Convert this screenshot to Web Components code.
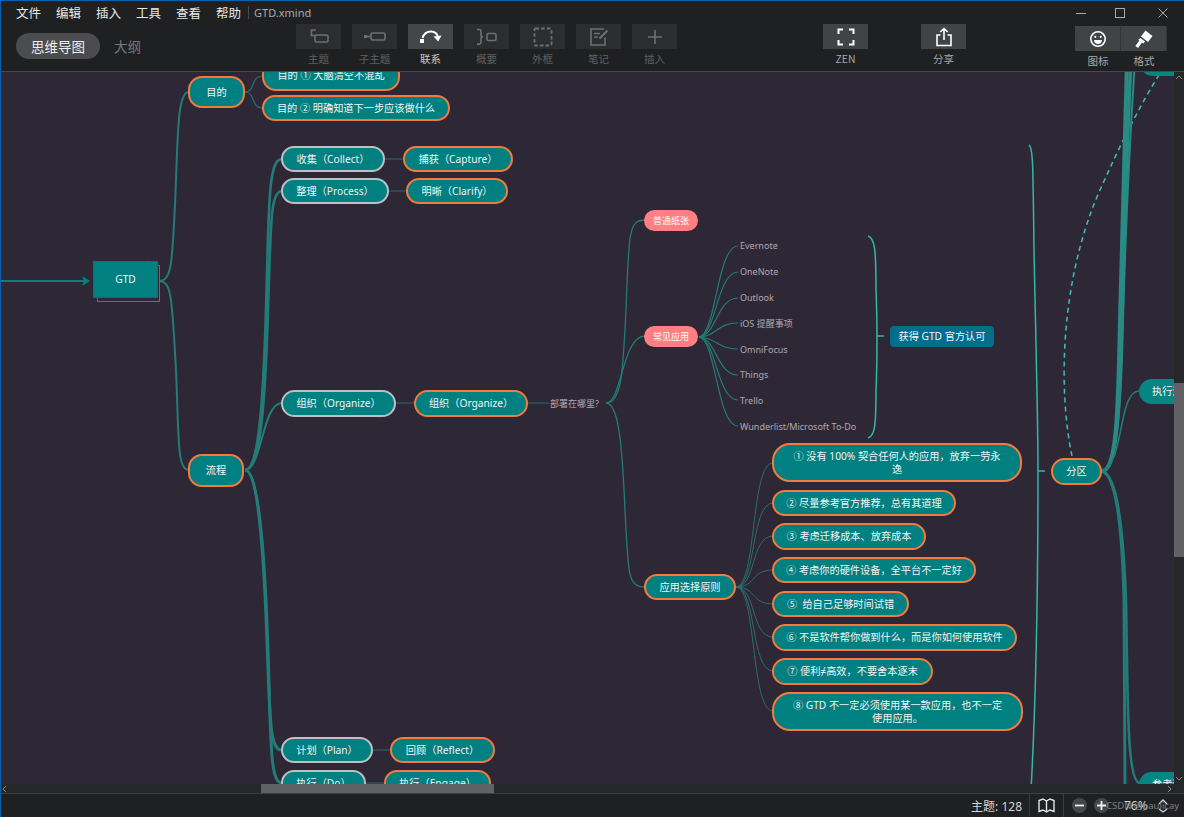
<!DOCTYPE html>
<html lang="zh">
<head>
<meta charset="utf-8">
<title>GTD.xmind</title>
<style>
    html, body { margin: 0; height: 100%; background: #1f2022; overflow: hidden; }
    body { font-family: "Noto Sans", "Noto Sans CJK SC", sans-serif; }
</style>
</head>
<body>
<app-window>
    <menu-bar slot="menu" file="GTD.xmind"></menu-bar>
    <tool-bar slot="tools">
        <tool-button label="主题" dim>
            <svg viewBox="0 0 24 20" width="24" height="20" fill="none" stroke="currentColor" stroke-width="1.6"><path d="M9 3H4.500v5.500H8"/><rect x="8" y="8" width="13" height="7" rx="1.500"/></svg>
        </tool-button>
        <tool-button label="子主题" dim>
            <svg viewBox="0 0 24 20" width="24" height="20" fill="none" stroke="currentColor" stroke-width="1.6"><rect x="1" y="8" width="3" height="3" fill="currentColor" stroke="none"/><path d="M4 9.500h3"/><rect x="8" y="6" width="14" height="7" rx="1.500"/></svg>
        </tool-button>
        <tool-button label="联系" active>
            <svg viewBox="0 0 24 20" width="24" height="20" fill="none" stroke="currentColor" stroke-width="2"><rect x="1" y="12" width="4" height="4" fill="currentColor" stroke="none"/><path d="M3.500 11C5 6.500 8.500 4.500 12 4.500c3.500 0 6 2 7 5.500"/><path d="M14.500 9.500l4.700 5 3.300-6z" fill="currentColor" stroke="none"/></svg>
        </tool-button>
        <tool-button label="概要" dim>
            <svg viewBox="0 0 24 20" width="24" height="20" fill="none" stroke="currentColor" stroke-width="1.600"><path d="M2 2.500h2.500c1.500 0 1.500 1 1.500 2.500v3c0 1 .5 1.800 2 1.800-1.500 0-2 .8-2 1.800v3c0 1.500 0 2.500-1.500 2.500H2"/><rect x="12" y="6.500" width="9" height="7" rx="1.500"/></svg>
        </tool-button>
        <tool-button label="外框" dim>
            <svg viewBox="0 0 24 20" width="24" height="20" fill="none" stroke="currentColor" stroke-width="1.800" stroke-dasharray="3.500 2.200"><rect x="3.500" y="1.500" width="17" height="17" rx="1"/></svg>
        </tool-button>
        <tool-button label="笔记" dim>
            <svg viewBox="0 0 24 20" width="24" height="20" fill="none" stroke="currentColor" stroke-width="1.600"><path d="M18 10.500v7.500H4V2h13"/><path d="M7 6.500h6M7 10h4"/><path d="M12.500 11.500L20.500 3.500" stroke-width="2.200"/></svg>
        </tool-button>
        <tool-button label="插入" dim>
            <svg viewBox="0 0 24 20" width="24" height="20" fill="none" stroke="currentColor" stroke-width="1.600"><path d="M12 3v14M5 10h14"/></svg>
        </tool-button>
        <tool-button label="ZEN" class="zen" bright>
            <svg viewBox="0 0 24 20" width="24" height="20" fill="none" stroke="currentColor" stroke-width="2"><path d="M9 2.500H4.500V7M15 2.500h4.500V7M9 17.500H4.500V13M15 17.500h4.500V13"/></svg>
        </tool-button>
        <tool-button label="分享" class="share" bright>
            <svg viewBox="0 0 24 20" width="24" height="20" fill="none" stroke="currentColor" stroke-width="1.600"><path d="M8.500 8H5v10.500h14V8h-3.500"/><path d="M12 13V2M8.300 5L12 1.500 15.700 5"/></svg>
        </tool-button>
        <tool-pair class="pair">
            <tool-button label="图标" bright joined>
                <svg viewBox="0 0 24 20" width="24" height="20" fill="none" stroke="currentColor" stroke-width="1.600"><circle cx="12" cy="10" r="7.200"/><circle cx="9.300" cy="7.800" r="1.100" fill="currentColor" stroke="none"/><circle cx="14.700" cy="7.800" r="1.100" fill="currentColor" stroke="none"/><path d="M8 11h8c0 2.700-1.700 4-4 4s-4-1.300-4-4z" fill="currentColor" stroke="none"/></svg>
            </tool-button>
            <tool-button label="格式" bright joined>
                <svg viewBox="0 0 24 20" width="24" height="20" fill="currentColor"><path d="M13.500 1.500l7 5.500-4.500 6-7-5.500z"/><path d="M8.500 9l4.500 3.500-1.500 2-1.500-1-4 5.500-2.700-2 4-5.300-1-1z"/></svg>
            </tool-button>
        </tool-pair>
    </tool-bar>

    <mind-map slot="canvas">
        <map-node kind="focus" x="188" y="76" w="57" h="32">目的</map-node>
        <map-node kind="focus" x="262" y="60" w="138" h="31">目的 ① 大脑清空不混乱</map-node>
        <map-node kind="focus" x="262" y="95" w="188" h="26">目的 ② 明确知道下一步应该做什么</map-node>
        <map-node kind="root" x="93" y="261" w="65" h="37">GTD</map-node>
        <map-node kind="grey" x="281" y="146" w="104" h="26">收集（Collect）</map-node>
        <map-node kind="focus" x="403" y="146" w="110" h="26">捕获（Capture）</map-node>
        <map-node kind="grey" x="281" y="178" w="108" h="26">整理（Process）</map-node>
        <map-node kind="focus" x="406" y="178" w="102" h="26">明晰（Clarify）</map-node>
        <map-node kind="grey" x="281" y="390" w="115" h="27">组织（Organize）</map-node>
        <map-node kind="focus" x="414" y="390" w="114" h="27">组织（Organize）</map-node>
        <map-node kind="focus" x="188" y="454" w="56" h="33">流程</map-node>
        <map-node kind="plain" x="550" y="396" w="50" h="14">部署在哪里?</map-node>
        <map-node kind="pink" x="644" y="210" w="54" h="21">普通纸张</map-node>
        <map-node kind="pink" x="644" y="326" w="54" h="21">常见应用</map-node>
        <map-node kind="plain" x="740" y="238" w="60" h="14">Evernote</map-node>
        <map-node kind="plain" x="740" y="264" w="60" h="14">OneNote</map-node>
        <map-node kind="plain" x="740" y="290" w="60" h="14">Outlook</map-node>
        <map-node kind="plain" x="740" y="316" w="70" h="14">iOS 提醒事项</map-node>
        <map-node kind="plain" x="740" y="342" w="60" h="14">OmniFocus</map-node>
        <map-node kind="plain" x="740" y="367" w="60" h="14">Things</map-node>
        <map-node kind="plain" x="740" y="393" w="60" h="14">Trello</map-node>
        <map-node kind="plain" x="740" y="419" w="125" h="14">Wunderlist/Microsoft To-Do</map-node>
        <map-node kind="blue" x="890" y="326" w="104" h="21">获得 GTD 官方认可</map-node>
        <map-node kind="focus" x="644" y="574" w="92" h="26">应用选择原则</map-node>
        <map-node kind="focus" x="772" y="443" w="250" h="39" radius="18">① 没有 100% 契合任何人的应用，放弃一劳永<br>逸</map-node>
        <map-node kind="focus" x="772" y="490" w="184" h="26">② 尽量参考官方推荐，总有其道理</map-node>
        <map-node kind="focus" x="772" y="523" w="154" h="27">③ 考虑迁移成本、放弃成本</map-node>
        <map-node kind="focus" x="772" y="557" w="204" h="26">④ 考虑你的硬件设备，全平台不一定好</map-node>
        <map-node kind="focus" x="772" y="591" w="137" h="26">⑤&nbsp; 给自己足够时间试错</map-node>
        <map-node kind="focus" x="772" y="624" w="245" h="27">⑥ 不是软件帮你做到什么，而是你如何使用软件</map-node>
        <map-node kind="focus" x="772" y="658" w="161" h="27">⑦ 便利≠高效，不要舍本逐末</map-node>
        <map-node kind="focus" x="772" y="692" w="251" h="39" radius="18">⑧ GTD 不一定必须使用某一款应用，也不一定<br>使用应用。</map-node>
        <map-node kind="focus" x="1051" y="458" w="51" h="27">分区</map-node>
        <map-node kind="flat" x="1139" y="379" w="70" h="25">执行清单</map-node>
        <map-node kind="flat" x="1139" y="772" w="70" h="25">参考资料</map-node>
        <map-node kind="flat" x="1140" y="50" w="70" h="26"></map-node>
        <map-node kind="grey" x="281" y="737" w="92" h="26">计划（Plan）</map-node>
        <map-node kind="focus" x="390" y="737" w="105" h="26">回顾（Reflect）</map-node>
        <map-node kind="grey" x="281" y="770" w="85" h="26">执行（Do）</map-node>
        <map-node kind="focus" x="384" y="770" w="107" h="26">执行（Engage）</map-node>
    </mind-map>

    <status-bar slot="status" topics="128" zoom="76%"></status-bar>
</app-window>

<script>
class AppWindow extends HTMLElement {
    constructor() {
        super();
        this.attachShadow({ mode: 'open' });
        this.shadowRoot.innerHTML = `
            <style>
                :host {
                    display: flex;
                    flex-direction: column;
                    width: 1184px;
                    height: 817px;
                    box-sizing: border-box;
                    border-top: 1px solid #0a62ad;
                    border-left: 1px solid #0a62ad;
                    background: #1f2022;
                }
                .work {
                    display: grid;
                    grid-template-columns: 1173px 10px;
                    grid-template-rows: 712px 10px;
                    flex: none;
                }
                .vbar { background: #262729; position: relative; }
                .vbar i {
                    display: block;
                    margin-top: 311px;
                    height: 174px;
                    background: #5f6165;
                }
                .vbar svg { position: absolute; left: 2px; top: 3px; }
                .vbar svg.down { top: auto; bottom: 3px; }
                .hbar { background: #262729; position: relative; border-bottom: 1px solid #3d3e40; box-sizing: border-box; }
                .hbar i {
                    display: block;
                    margin-left: 260px;
                    width: 233px;
                    height: 100%;
                    background: #5f6165;
                }
                .hbar svg { position: absolute; top: 2px; left: 1px; }
                .hbar svg.next { left: auto; right: 2px; }
                .corner { background: #262729; border-bottom: 1px solid #3d3e40; box-sizing: border-box; }
            </style>
            <slot name="menu"></slot>
            <slot name="tools"></slot>
            <div class="work">
                <slot name="canvas"></slot>
                <div class="vbar">
                    <svg width="6" height="4" viewBox="0 0 6 4" fill="none" stroke="#8a8b8d"><path d="M0 4l3-3 3 3"/></svg>
                    <i></i>
                    <svg class="down" width="6" height="4" viewBox="0 0 6 4" fill="none" stroke="#8a8b8d"><path d="M0 0l3 3 3-3"/></svg>
                </div>
                <div class="hbar">
                    <svg width="4" height="6" viewBox="0 0 4 6" fill="none" stroke="#8a8b8d"><path d="M4 0L1 3l3 3"/></svg>
                    <i></i>
                    <svg class="next" width="4" height="6" viewBox="0 0 4 6" fill="none" stroke="#8a8b8d"><path d="M0 0l3 3-3 3"/></svg>
                </div>
                <div class="corner"></div>
            </div>
            <slot name="status"></slot>
        `;
    }
}

class MenuBar extends HTMLElement {
    constructor() {
        super();
        this.attachShadow({ mode: 'open' });
    }

    connectedCallback() {
        const items = ['文件', '编辑', '插入', '工具', '查看', '帮助'];
        this.shadowRoot.innerHTML = `
            <style>
                :host {
                    display: flex;
                    align-items: center;
                    height: 23px;
                    padding: 0 16px 0 15px;
                    font: 12.500px "Noto Sans CJK SC", "Noto Sans", sans-serif;
                    color: #e8e8e8;
                }
                nav { display: flex; gap: 15px; }
                .file {
                    margin-left: 7px;
                    padding-left: 5px;
                    border-left: 1px solid #4a4b4d;
                    font: 11px "Noto Sans", sans-serif;
                    line-height: 13px;
                    color: #a9aaac;
                }
                .win { margin-left: auto; display: flex; gap: 29px; color: #a8a9ab; }
                svg { display: block; }
            </style>
            <nav>${items.map(t => `<span>${t}</span>`).join('')}</nav>
            <span class="file">${this.getAttribute('file')}</span>
            <div class="win">
                <svg width="10" height="10" fill="none" stroke="currentColor"><path d="M0 5.500h10"/></svg>
                <svg width="10" height="10" fill="none" stroke="currentColor"><rect x=".5" y=".5" width="9" height="9"/></svg>
                <svg style="margin-left:4px" width="10" height="10" fill="none" stroke="currentColor"><path d="M.5.500l9 9M9.500.500l-9 9"/></svg>
            </div>
        `;
    }
}

class ToolBar extends HTMLElement {
    constructor() {
        super();
        this.attachShadow({ mode: 'open' });
        this.shadowRoot.innerHTML = `
            <style>
                :host {
                    display: flex;
                    height: 48px;
                    box-sizing: border-box;
                    border-bottom: 1px solid #47484a;
                    padding-left: 15px;
                    font-family: "Noto Sans CJK SC", "Noto Sans", sans-serif;
                }
                .tabs {
                    display: flex;
                    align-items: center;
                    width: 280px;
                    height: 26px;
                    margin-top: 9px;
                    flex: none;
                }
                .tabs b {
                    font-weight: 400;
                    font-size: 13.500px;
                    color: #eee;
                    background: #4b4c4e;
                    border-radius: 13px;
                    width: 84px;
                    height: 26px;
                    line-height: 26px;
                    text-align: center;
                }
                .tabs span { margin-left: 14px; font-size: 13.500px; color: #77787a; }
                .tools { display: flex; gap: 11px; }
                ::slotted(.zen) { margin-left: 135px; }
                ::slotted(.share) { margin-left: 42px; }
                ::slotted(.pair) { margin-left: 98px; }
            </style>
            <div class="tabs"><b>思维导图</b><span>大纲</span></div>
            <div class="tools"><slot></slot></div>
        `;
    }
}

class ToolPair extends HTMLElement {
    constructor() {
        super();
        this.attachShadow({ mode: 'open' });
        this.shadowRoot.innerHTML = `
            <style>
                :host { display: flex; padding-top: 2px; gap: 0; }
            </style>
            <slot></slot>
        `;
    }
}

class ToolButton extends HTMLElement {
    constructor() {
        super();
        this.attachShadow({ mode: 'open' });
    }

    connectedCallback() {
        const dim = this.hasAttribute('dim');
        const active = this.hasAttribute('active');
        const joined = this.hasAttribute('joined');
        const bg = active ? '#454648' : dim ? '#2c2d2f' : '#424345';
        const fg = dim ? '#6e6f71' : '#ffffff';
        const text = active ? '#c9c9c9' : dim ? '#5f6062' : '#a6a7a9';
        this.shadowRoot.innerHTML = `
            <style>
                :host {
                    display: flex;
                    flex-direction: column;
                    align-items: center;
                    width: ${joined ? 46 : 45}px;
                }
                .box {
                    width: 100%;
                    height: 25px;
                    display: flex;
                    align-items: center;
                    justify-content: center;
                    background: ${bg};
                    color: ${fg};
                    box-sizing: border-box;
                    ${joined ? 'border-right: 1px solid #353638;' : ''}
                }
                .label {
                    margin-top: 3px;
                    font-size: 10.500px;
                    line-height: 14px;
                    color: ${text};
                }
            </style>
            <div class="box"><slot></slot></div>
            <div class="label">${this.getAttribute('label')}</div>
        `;
    }
}

// every link of the map is one path in page coordinates: [d, width, colour, dash]
const TEAL = '#237c77';
const THIN = '#2b6f6e';
const BRACE = '#34b7a7';
const fan = (x1, y1, x2, ys, w, c = TEAL) => ys.map(y => {
    const mid = (x1 + x2) / 2;
    return [`M${x1} ${y1}C${mid + 2} ${y1} ${mid - 4} ${y} ${x2} ${y}`, w, c];
});

const LINKS = [
    ['M159 281C172 281 172 262 175 205C178 135 177 92 189 92', 2, TEAL],
    ['M159 281C172 281 172 300 176 370C179 440 177 470 189 470', 2, TEAL],
    ...fan(245, 92, 263, [76, 108], 1.200, THIN),
    ['M245 470C258 470 263 410 266 310C269 205 268 159 282 159', 2.600, TEAL],
    ['M245 470C260 470 265 410 268 310C271 225 270 191 282 191', 2.600, TEAL],
    ['M245 470C262 470 262 403 282 403', 2, TEAL],
    ['M245 470C259 470 264 560 267 640C270 725 270 750 282 750', 3, TEAL],
    ['M245 470C259 470 265 560 268 650C271 745 270 783 282 783', 3, TEAL],
    ['M385 159H403M389 191H406M396 403H414M528 403H549M373 750H390M366 783H384', 1.200, '#2a6a6c'],
    ['M606 403C622 403 623 370 626 310C629 235 628 220 645 220', 1.300, TEAL],
    ['M606 403C622 403 622 336 645 336', 1.300, TEAL],
    ['M606 403C618 403 622 440 625 510C628 575 628 587 645 587', 1.300, TEAL],
    ...[246, 272, 298, 323, 349, 375, 400, 426].map(y =>
        [`M699 337C716 ${337 + (y - 337) * .02} 717 ${y} 738 ${y}`, 1.200, TEAL]),
    ...fan(736, 587, 773, [463, 503, 536, 570, 604, 637, 671, 711], 1, THIN),
    ['M868 236C875 238 876 250 876 290C877 315 877 330 877 336C877 350 877 370 876 390C876 425 875 436 868 438', 1.500, BRACE],
    ['M877 336H884', 1.500, BRACE],
    ['M1029 145C1033 147 1033 165 1034 250C1036 350 1038 420 1038 471C1038 600 1036 700 1031 790', 1.500, BRACE],
    ['M1038 471H1045', 1.500, BRACE],
    ['M1072 456C1058 390 1060 280 1100 190C1120 145 1140 105 1162 70', 1.500, '#3cc2b2', '5 4'],
    ['M1102 471C1116 471 1118 420 1120 320C1123 200 1125 120 1127 60', 4, '#2a8a84'],
    ['M1102 471C1116 471 1119 420 1122 320C1125 200 1128 120 1131 60', 3.500, '#2a8a84'],
    ['M1102 471C1116 471 1121 420 1123 320C1127 180 1131 120 1135 60', 2, '#2a8a84'],
    ['M1102 471C1124 466 1118 391 1139 391', 1.600, TEAL],
    ['M1102 471C1116 475 1122 520 1124 600C1125 700 1125 760 1125 790', 3, '#237c77'],
    ['M1102 471C1116 475 1123 520 1126 600C1128 690 1126 783 1140 783', 2.600, '#237c77'],
    ['M1 281H86', 2, '#0d7f7d']
];

class MindMap extends HTMLElement {
    constructor() {
        super();
        this.attachShadow({ mode: 'open' });
        const paths = LINKS.map(([d, w, c, dash]) =>
            `<path d="${d}" stroke-width="${w}" stroke="${c}"${dash ? ` stroke-dasharray="${dash}"` : ''}/>`).join('');
        this.shadowRoot.innerHTML = `
            <style>
                :host {
                    display: block;
                    position: relative;
                    overflow: hidden;
                    width: 1173px;
                    height: 712px;
                    background: #2e2736;
                    font-family: "Noto Sans", "Noto Sans CJK SC", sans-serif;
                }
                svg { position: absolute; left: 0; top: 0; }
            </style>
            <svg width="1173" height="712" viewBox="1 72 1173 712" fill="none">
                ${paths}
                <path d="M82 276l8 5-8 5 2-5z" fill="#0d7f7d"/>
            </svg>
            <slot></slot>
        `;
    }
}

class MapNode extends HTMLElement {
    constructor() {
        super();
        this.attachShadow({ mode: 'open' });
    }

    connectedCallback() {
        const kind = this.getAttribute('kind');
        const num = n => Number(this.getAttribute(n));
        const radius = this.getAttribute('radius') || 14;
        // position is the content here: nodes sit on a free canvas
        this.style.cssText = `left:${num('x') - 1}px;top:${num('y') - 72}px;width:${num('w')}px;height:${num('h')}px`;
        const looks = {
            focus: `background:#008080;border:2px solid #f47b3c;border-radius:${radius}px;color:#f2f5f5`,
            grey: 'background:#008080;border:2px solid #bdbfc0;border-radius:14px;color:#f2f5f5',
            flat: 'background:#068583;border-radius:13px;color:#f2f5f5;justify-content:flex-start;padding-left:13px',
            pink: 'background:#ff7f82;border-radius:11px;color:#fff;font-size:9px',
            blue: 'background:#006e8c;border-radius:4px;color:#f2f5f5',
            root: 'background:#008080;border:1px solid #0d6d6c;color:#f2f5f5',
            plain: 'color:#aeaab2;justify-content:flex-start;white-space:nowrap;font-size:9px'
        };
        this.shadowRoot.innerHTML = `
            <style>
                :host {
                    position: absolute;
                    display: block;
                }
                .n {
                    position: relative;
                    box-sizing: border-box;
                    width: 100%;
                    height: 100%;
                    display: flex;
                    align-items: center;
                    justify-content: center;
                    text-align: center;
                    font-size: 10.200px;
                    line-height: 13px;
                    white-space: nowrap;
                    ${looks[kind]}
                }
                .back {
                    position: absolute;
                    left: 4px;
                    top: 4px;
                    right: -2px;
                    bottom: -4px;
                    border: 1px solid #238a86;
                }
            </style>
            ${kind === 'root' ? '<div class="back"></div>' : ''}
            <div class="n"><span><slot></slot></span></div>
        `;
    }
}

class StatusBar extends HTMLElement {
    constructor() {
        super();
        this.attachShadow({ mode: 'open' });
    }

    connectedCallback() {
        this.shadowRoot.innerHTML = `
            <style>
                :host {
                    display: flex;
                    flex: 1;
                    align-items: stretch;
                    justify-content: flex-end;
                    position: relative;
                    font: 12px "Noto Sans", "Noto Sans CJK SC", sans-serif;
                    color: #d6d6d6;
                }
                .topics { display: flex; align-items: center; padding-right: 7px; }
                .book {
                    display: flex;
                    align-items: center;
                    justify-content: center;
                    width: 33px;
                    border-left: 1px solid #3a3b3d;
                    border-right: 1px solid #3a3b3d;
                }
                .zoom { display: flex; align-items: center; width: 120px; box-sizing: border-box; padding-left: 8px; }
                .c {
                    width: 15px;
                    height: 15px;
                    border-radius: 50%;
                    background: #46474a;
                    display: flex;
                    align-items: center;
                    justify-content: center;
                    margin-right: 7px;
                }
                .val { margin-left: 8px; width: 34px; }
                .mark {
                    position: absolute;
                    left: 1105px;
                    top: 5px;
                    font-size: 9.500px;
                    color: #7f8082;
                    white-space: nowrap;
                }
            </style>
            <div class="topics">主题: ${this.getAttribute('topics')}</div>
            <div class="book">
                <svg width="17" height="15" viewBox="0 0 17 15" fill="none" stroke="#e6e6e6" stroke-width="1.400"><path d="M8.500 3L5 1 1 2.500v11L5 12l3.500 2 3.500-2 4 1.500v-11L12 1z"/><path d="M8.500 3v11"/></svg>
            </div>
            <div class="zoom">
                <div class="c"><svg width="9" height="9" stroke="#eee" stroke-width="1.800"><path d="M0 4.500h9"/></svg></div>
                <div class="c"><svg width="9" height="9" stroke="#eee" stroke-width="1.800"><path d="M0 4.500h9M4.500 0v9"/></svg></div>
                <div class="val">${this.getAttribute('zoom')}</div>
                <svg width="10" height="16" viewBox="0 0 10 16" fill="none" stroke="#d6d6d6" stroke-width="1.300"><path d="M1 6l4-4 4 4M1 11l4 3 4-3"/></svg>
            </div>
            <div class="mark">CSDN @paulicay</div>
        `;
    }
}

customElements.define('app-window', AppWindow);
customElements.define('menu-bar', MenuBar);
customElements.define('tool-bar', ToolBar);
customElements.define('tool-pair', ToolPair);
customElements.define('tool-button', ToolButton);
customElements.define('mind-map', MindMap);
customElements.define('map-node', MapNode);
customElements.define('status-bar', StatusBar);
</script>
</body>
</html>
